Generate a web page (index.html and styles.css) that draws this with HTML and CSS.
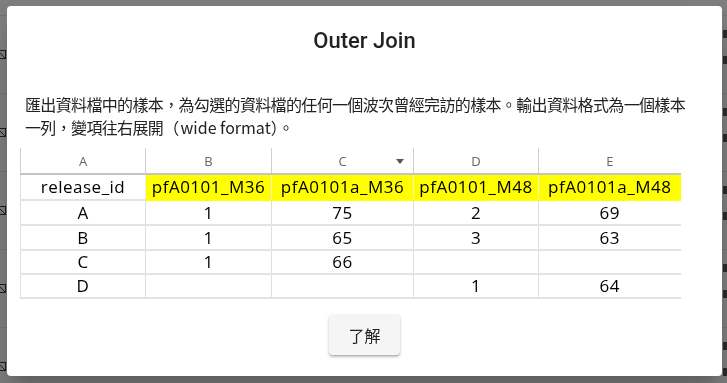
FILE: index.html
```html
<!DOCTYPE html>
<html lang="zh-Hant">
<head>
    <meta charset="UTF-8">
    <meta name="viewport" content="width=device-width, initial-scale=1.0">
    <title>Outer Join</title>
    <link rel="stylesheet" href="styles.css">
</head>
<body>
    <div class="page">
        <div class="page-row"><span class="row-icon"></span><span class="row-mark"></span><span class="row-mark"></span></div>
        <div class="page-row"><span class="row-icon"></span><span class="row-mark"></span><span class="row-mark"></span></div>
        <div class="page-row"><span class="row-icon"></span><span class="row-mark"></span><span class="row-mark"></span></div>
        <div class="page-row"><span class="row-icon"></span><span class="row-mark"></span><span class="row-mark"></span></div>
        <div class="page-row last"><span class="row-icon"></span><span class="row-mark"></span><span class="row-mark"></span></div>
        <div class="page-foot"></div>
    </div>

    <div class="backdrop"></div>

    <div class="dialog">
        <h2 class="dialog-title">Outer Join</h2>
        <div class="dialog-content">
            <p class="dialog-text">匯出資料檔中的樣本，為勾選的資料檔的任何一個波次曾經完訪的樣本。輸出資料格式為一個樣本<br>一列，變項往右展開（<span class="latin">wide format</span>）。</p>
            <table class="sheet">
                <colgroup>
                    <col class="col-a">
                    <col class="col-b">
                    <col class="col-c">
                    <col class="col-d">
                    <col class="col-e">
                </colgroup>
                <thead>
                    <tr class="letters">
                        <th>A</th>
                        <th>B</th>
                        <th class="filter-col">C<span class="filter-arrow"></span></th>
                        <th>D</th>
                        <th>E</th>
                    </tr>
                </thead>
                <tbody>
                    <tr class="names">
                        <td>release_id</td>
                        <td class="hl">pfA0101_M36</td>
                        <td class="hl">pfA0101a_M36</td>
                        <td class="hl">pfA0101_M48</td>
                        <td class="hl">pfA0101a_M48</td>
                    </tr>
                    <tr class="r1"><td>A</td><td>1</td><td>75</td><td>2</td><td>69</td></tr>
                    <tr class="r2"><td>B</td><td>1</td><td>65</td><td>3</td><td>63</td></tr>
                    <tr class="r3"><td>C</td><td>1</td><td>66</td><td></td><td></td></tr>
                    <tr class="r4"><td>D</td><td></td><td></td><td>1</td><td>64</td></tr>
                </tbody>
            </table>
        </div>
        <div class="dialog-actions">
            <button class="ok-button">了解</button>
        </div>
    </div>
</body>
</html>
```

FILE: styles.css
```css
body {
    margin: 0;
    padding: 0;
    width: 727px;
    height: 383px;
    overflow: hidden;
    background-color: #fdfdfd;
    font-family: Roboto, "Noto Sans CJK TC", sans-serif;
}
.page {
    height: 383px;
    padding-top: 15px;
    box-sizing: border-box;
}
.page-row {
    height: 77px;
    border-top: 1px solid #e6e6e6;
    position: relative;
}
.page-row.last {
    height: 46px;
}
.row-icon {
    position: absolute;
    left: -3px;
    top: 34px;
    width: 7px;
    height: 7px;
    border: 1px solid #3a3a3a;
    background: linear-gradient(45deg, transparent 45%, #3a3a3a 46%, #3a3a3a 56%, transparent 57%);
}
.row-mark {
    position: absolute;
    right: 0;
    width: 4px;
    height: 8px;
    background-color: #555;
}
.row-mark:nth-of-type(2) {
    top: 14px;
}
.row-mark:nth-of-type(3) {
    top: 40px;
}
.page-foot {
    margin: 0 70px 0 248px;
    border-top: 1px solid #222;
}
.backdrop {
    position: fixed;
    top: 0;
    left: 0;
    width: 100%;
    height: 100%;
    background-color: rgba(0, 0, 0, 0.5);
}
.dialog {
    position: fixed;
    top: 6px;
    left: 7px;
    width: 715px;
    height: 370px;
    background-color: #fff;
    border-radius: 4px;
    box-shadow: 0 11px 15px -7px rgba(0, 0, 0, 0.2), 0 24px 38px 3px rgba(0, 0, 0, 0.14);
    display: flex;
    flex-direction: column;
}
.dialog-title {
    margin: 0;
    padding: 20px 24px 0;
    text-align: center;
    font-family: Roboto, sans-serif;
    font-weight: 500;
    font-size: 22px;
    line-height: 30px;
    color: rgba(0, 0, 0, 0.87);
}
.dialog-content {
    padding: 0 13px;
}
.dialog-text {
    margin: 37px 0 0;
    padding: 0 5px;
    font-family: "Noto Sans CJK TC", sans-serif;
    font-size: 16px;
    letter-spacing: -0.65px;
    line-height: 23px;
    color: #222;
    white-space: nowrap;
}
.latin {
    letter-spacing: 0;
    padding-left: 2px;
}
.sheet {
    margin-top: 9px;
    border-collapse: collapse;
    table-layout: fixed;
    width: 660px;
    font-family: "Open Sans", sans-serif;
    color: #000;
}
.col-a { width: 125px; }
.col-b { width: 126px; }
.col-c { width: 142px; }
.col-d { width: 125px; }
.col-e { width: 142px; }
.sheet th, .sheet td {
    padding: 0;
    text-align: center;
    white-space: nowrap;
    overflow: hidden;
}
.letters th {
    height: 25px;
    font-weight: 400;
    font-size: 13px;
    color: #666;
    border-left: 1px solid #d0d0d0;
    border-bottom: 2px solid #c4c4c4;
}
.filter-col {
    position: relative;
}
.filter-arrow {
    position: absolute;
    right: 9px;
    top: 11px;
    width: 0;
    height: 0;
    border-left: 4px solid transparent;
    border-right: 4px solid transparent;
    border-top: 5px solid #555;
}
.sheet td {
    font-size: 17px;
    letter-spacing: 0.5px;
    line-height: 22px;
    border-left: 1px solid #dedede;
    border-bottom: 2px solid #e3e3e3;
}
.names td { height: 24px; }
.r1 td, .r2 td { height: 23px; }
.r3 td, .r4 td { height: 22px; }
.hl {
    background-color: #ffff00;
    border-left-color: #f4f4d0 !important;
    border-bottom-color: #ffff00 !important;
}
.dialog-actions {
    display: flex;
    justify-content: center;
    padding-top: 15px;
}
.ok-button {
    width: 71px;
    height: 41px;
    border: none;
    border-radius: 4px;
    background-color: #f5f5f5;
    box-shadow: 0 2px 3px rgba(0, 0, 0, 0.25), 0 1px 1px rgba(0, 0, 0, 0.1);
    font-family: "Noto Sans CJK TC", sans-serif;
    font-size: 16px;
    color: #222;
    cursor: pointer;
}
```
